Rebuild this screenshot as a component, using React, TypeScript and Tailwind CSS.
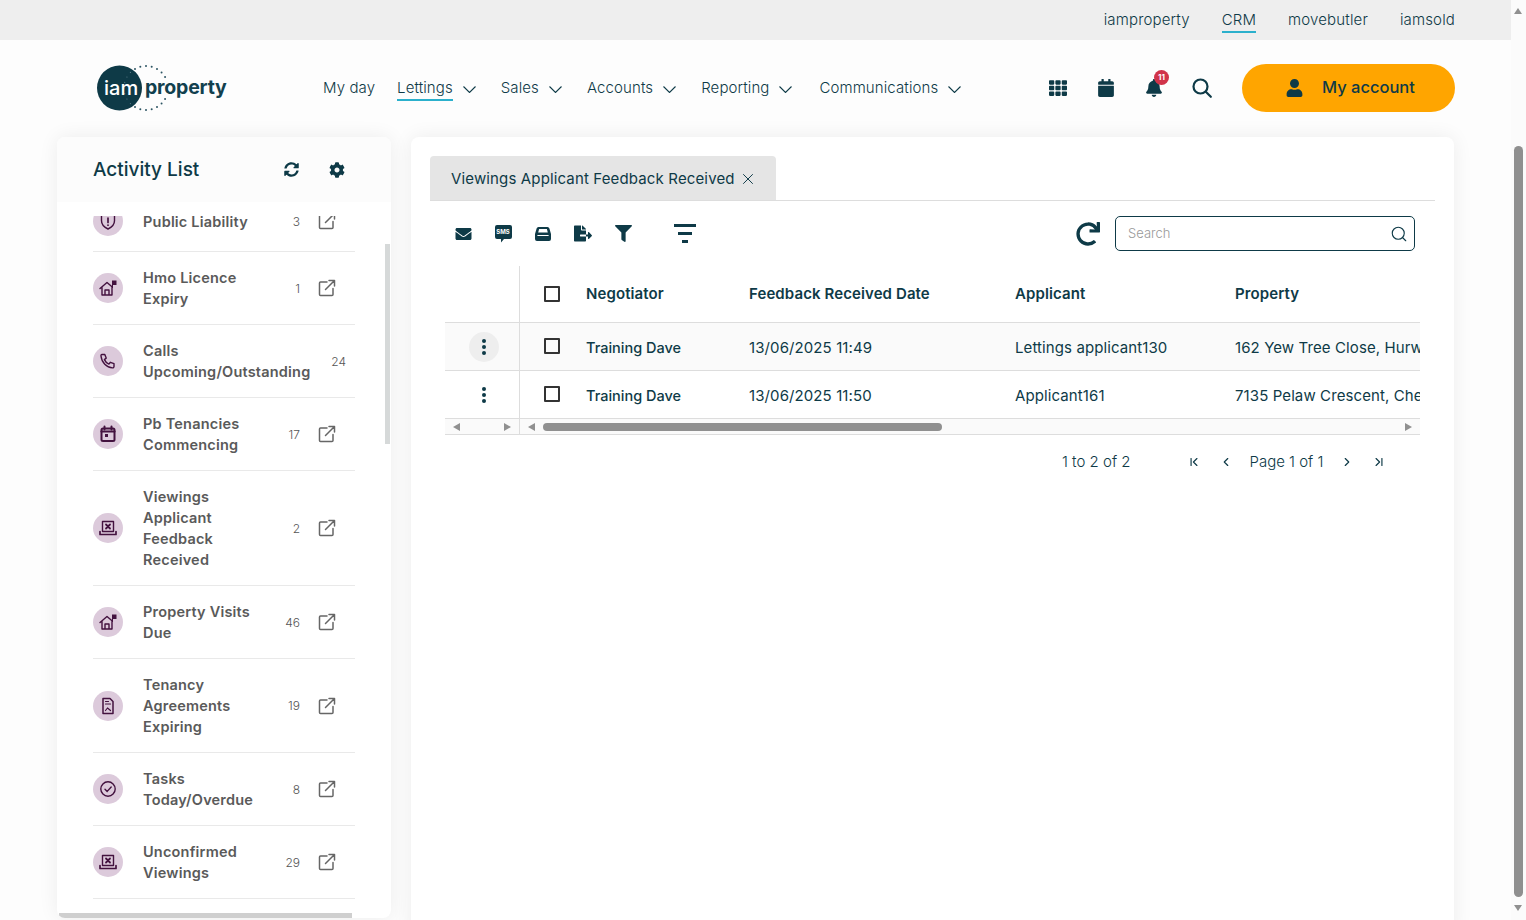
import { ChevronFirst, ChevronLast, ChevronLeft, ChevronRight, Search, X } from "lucide-react";
import { FaBell, FaCalendar, FaCog, FaEnvelope, FaFileExport, FaFilter, FaRedo, FaSyncAlt, FaTh, FaUser } from "react-icons/fa";

const topLinks = ["iamproperty", "CRM", "movebutler", "iamsold"];
const navItems = [
  { label: "Lettings", active: true },
  { label: "Sales" },
  { label: "Accounts" },
  { label: "Reporting" },
  { label: "Communications" },
];

const activities = [
  { icon: "shield", lines: ["Public Liability"], count: "3" },
  { icon: "home", lines: ["Hmo Licence", "Expiry"], count: "1" },
  { icon: "phone", lines: ["Calls", "Upcoming/Outstanding"], count: "24", noLink: true },
  { icon: "calendar", lines: ["Pb Tenancies", "Commencing"], count: "17" },
  { icon: "viewing", lines: ["Viewings", "Applicant", "Feedback", "Received"], count: "2" },
  { icon: "home", lines: ["Property Visits", "Due"], count: "46" },
  { icon: "doc", lines: ["Tenancy", "Agreements", "Expiring"], count: "19" },
  { icon: "check", lines: ["Tasks", "Today/Overdue"], count: "8" },
  { icon: "viewing", lines: ["Unconfirmed", "Viewings"], count: "29" },
  { icon: "home", lines: ["Warranty"], count: "5" },
];

const rows = [
  { negotiator: "Training Dave", date: "13/06/2025 11:49", applicant: "Lettings applicant130", property: "162 Yew Tree Close, Hurworth Road", hover: true },
  { negotiator: "Training Dave", date: "13/06/2025 11:50", applicant: "Applicant161", property: "7135 Pelaw Crescent, Chester Road", hover: false },
];

function ActivityIcon({ name }: { name: string }) {
  const stroke = { fill: "none", stroke: "#43123f", strokeWidth: 1.7, strokeLinecap: "round" as const, strokeLinejoin: "round" as const };
  return (
    <span className="flex h-[30px] w-[30px] shrink-0 items-center justify-center rounded-full bg-[#dccadb]">
      <svg viewBox="0 0 20 20" className="h-[20px] w-[20px]">
        {name === "shield" && (
          <>
            <path d="M10 2l6.500 2.400v5.300c0 3.800-2.700 6.500-6.500 8.300-3.800-1.800-6.500-4.500-6.500-8.300V4.400z" {...stroke} strokeWidth={1.4} />
            <path d="M10 7v4.500M10 14v.2" {...stroke} />
          </>
        )}
        {name === "home" && (
          <>
            <path d="M2 10.500L9 4.500l5 4.300M4 9.500V17h10V9.500M7 17v-5h4v5" {...stroke} strokeWidth={1.4} />
            <path d="M14 2.500h4.500V7H15v3h-1z" fill="#43123f" />
          </>
        )}
        {name === "phone" && (
          <path d="M4 3.500h2.800l1.400 3.600-1.800 1.500c.9 2 2.500 3.600 4.500 4.500l1.500-1.800 3.600 1.400v2.800c0 .8-.7 1.500-1.500 1.400C8.600 16.400 3.600 11.400 3 5c-.1-.8.2-1.500 1-1.500z" {...stroke} strokeWidth={1.4} />
        )}
        {name === "calendar" && (
          <>
            <rect x="3.500" y="4.500" width="13" height="12.500" rx="1.500" {...stroke} strokeWidth={2} />
            <path d="M3.500 7.500h13" {...stroke} strokeWidth={2.2} />
            <path d="M6.500 2.500v3M13.500 2.500v3" {...stroke} strokeWidth={2} />
            <rect x="7" y="10" width="3" height="3" fill="#43123f" />
          </>
        )}
        {name === "viewing" && (
          <>
            <rect x="4.500" y="3.500" width="11" height="10" {...stroke} strokeWidth={1.4} />
            <path d="M8 6.500l4 4M12 6.500l-4 4" {...stroke} strokeWidth={1.8} />
            <path d="M2 13.500v3h16v-3" {...stroke} />
          </>
        )}
        {name === "doc" && (
          <>
            <path d="M5 2.500h7l3 3v12H5z" {...stroke} strokeWidth={1.5} />
            <path d="M7.500 5.500h3M7.500 8h5M7.500 14.500l2-2.500 3 2.500" {...stroke} strokeWidth={1.2} />
          </>
        )}
        {name === "check" && (
          <>
            <circle cx="10" cy="10" r="7.200" {...stroke} strokeWidth={1.4} />
            <path d="M7 10.200l2.200 2.200 4-4.400" {...stroke} strokeWidth={1.4} />
          </>
        )}
      </svg>
    </span>
  );
}

function ExternalLink() {
  return (
    <svg viewBox="0 0 18 18" className="h-[18px] w-[18px] shrink-0" fill="none" stroke="#666666" strokeWidth="1.5" strokeLinecap="round" strokeLinejoin="round">
      <path d="M9 3H2.500a1 1 0 0 0-1 1v11.500a1 1 0 0 0 1 1H14a1 1 0 0 0 1-1V9.500" />
      <path d="M7.500 10.500l9-9M11 1.500h5.500V7" />
    </svg>
  );
}

function Logo() {
  const ring = [];
  for (let deg = -180; deg < 180; deg += 15) {
    if (Math.abs(deg) < 20) continue;
    const a = (deg * Math.PI) / 180;
    const inside = Math.abs(deg) > 120;
    ring.push({ deg, inside, x: 49 + 22 * Math.cos(a), y: 24 + 22 * Math.sin(a) });
  }
  return (
    <div className="relative h-[48px] w-[132px]">
      <svg viewBox="0 0 132 48" className="absolute inset-0 h-[48px] w-[132px]">
        <circle cx="22.500" cy="24" r="22.500" fill="#0e3a47" />
        {ring.map((d) => (
          <circle key={d.deg} cx={d.x} cy={d.y} r={d.inside ? 0.6 : 1} fill={d.inside ? "#5d7d88" : "#2d5563"} />
        ))}
      </svg>
      <span className="absolute left-[7px] top-[10px] text-[20px] leading-[28px] font-medium text-white">iam</span>
      <span className="absolute left-[48px] top-[9px] text-[19.5px] leading-[28px] font-bold tracking-[-0.2px] text-[#12404e]">property</span>
    </div>
  );
}

function InboxIcon() {
  return (
    <svg viewBox="0 0 16 14" className="h-[14px] w-[16px]">
      <path fillRule="evenodd" fill="#0e3a47" d="M3.500 0h9a2 2 0 0 1 1.900 1.500L16 7v5a2 2 0 0 1-2 2H2a2 2 0 0 1-2-2V7l1.600-5.500A2 2 0 0 1 3.500 0zm.6 2L3.200 5.500h9.600L11.900 2zM2.400 8v1h11.200V8z" />
    </svg>
  );
}

function SmsIcon() {
  return (
    <div className="relative h-[18px] w-[17px]">
      <svg viewBox="0 0 17 18" className="absolute inset-0 h-[18px] w-[17px]">
        <path fill="#0e3a47" d="M2 0h13a2 2 0 0 1 2 2v10a2 2 0 0 1-2 2H9l-3 3.500V14H2a2 2 0 0 1-2-2V2a2 2 0 0 1 2-2z" />
      </svg>
      <span className="absolute left-0 top-[3px] w-full text-center text-[6px] leading-[8px] font-bold text-white">SMS</span>
    </div>
  );
}

export default function App() {
  return (
    <div className="flex h-[920px] overflow-hidden bg-[#fdfdfd] font-['Inter',sans-serif] text-[#0e3a47]">
      <div className="w-[1511px] shrink-0">
        <div className="flex h-10 items-center justify-end gap-8 bg-[#eeeeee] pt-[2px] pr-[56px] text-[15px] font-light tracking-[0.15px]">
          {topLinks.map((link) => (
            <span key={link} className={link === "CRM" ? "border-b-2 border-[#2bb0cc] leading-[22px]" : "border-b-2 border-transparent leading-[22px]"}>
              {link}
            </span>
          ))}
        </div>

        <div className="flex h-[97px] items-center pr-[56px] pb-[2px] pl-[97px]">
          <Logo />
          <nav className="mt-[2px] ml-[94px] flex items-center gap-[25px] text-[15px] font-light tracking-[0.1px]">
            <span className="-mr-[3px]">My day</span>
            {navItems.map((item) => (
              <span key={item.label} className="flex items-center gap-[10px] last:ml-[2px]">
                <span className={item.active ? "border-b-2 border-[#2bb0cc] leading-[22px]" : "border-b-2 border-transparent leading-[22px]"}>{item.label}</span>
                <svg viewBox="0 0 13 7" className="mt-[2px] h-[7px] w-[13px]" fill="none" stroke="#0e3a47" strokeWidth="1.1">
                  <path d="M.5.500l6 6 6-6" />
                </svg>
              </span>
            ))}
          </nav>
          <div className="ml-auto flex items-center gap-[30px]">
            <FaTh className="h-[18px] w-[18px]" />
            <FaCalendar className="h-[18px] w-[18px]" />
            <div className="relative">
              <FaBell className="h-[18px] w-[18px]" />
              <span className="absolute -top-[9px] -right-[6px] flex h-[15px] w-[15px] items-center justify-center rounded-full bg-[#d1344a] text-[8px] font-bold text-white">11</span>
            </div>
            <svg viewBox="0 0 20 20" className="mr-[10px] -ml-px h-5 w-5" fill="none" stroke="#0e3a47" strokeWidth="2.2" strokeLinecap="round">
              <circle cx="8.500" cy="8.500" r="7" />
              <path d="M13.800 13.800l5 5" />
            </svg>
          </div>
          <div className="ml-[20px] flex h-12 w-[213px] items-center rounded-full bg-[#ffa500] pl-[44px] text-[16.5px] font-medium">
            <FaUser className="h-[18px] w-[17px]" />
            <span className="ml-[19px]">My account</span>
          </div>
        </div>

        <div className="flex gap-5 pl-[57px]">
          <aside className="h-[781px] w-[334px] shrink-0 overflow-hidden rounded-lg bg-white shadow-[0_0_20px_rgba(0,0,0,0.07)]">
            <div className="flex h-[65px] items-center bg-[#fcfcfc] pl-[36px]">
              <h2 className="pt-[2px] text-[19px] font-medium">Activity List</h2>
              <FaSyncAlt className="ml-auto h-[15px] w-[15px]" />
              <FaCog className="mr-[46px] ml-[30px] h-[16px] w-[16px]" />
            </div>
            <div className="relative mt-[14px] h-[702px] overflow-hidden pl-[36px]">
              <div className="-mt-[25px] w-[262px]">
                {activities.map((item) => (
                  <div key={item.lines.join(" ")} className="flex items-center border-b border-[#e9e9e9] py-[15px]">
                    <ActivityIcon name={item.icon} />
                    <div className="ml-[20px] text-[14.5px] leading-[21px] font-semibold tracking-[0.2px] whitespace-nowrap text-[#5a5a5a]">
                      {item.lines.map((line) => (
                        <div key={line}>{line}</div>
                      ))}
                    </div>
                    {item.noLink ? (
                      <span className="mr-[9px] ml-auto pt-px text-[12px] font-light text-[#555555]">{item.count}</span>
                    ) : (
                      <>
                        <span className="ml-auto pt-px text-[12px] font-light text-[#555555]">{item.count}</span>
                        <span className="mr-[19px] ml-[18px]">
                          <ExternalLink />
                        </span>
                      </>
                    )}
                  </div>
                ))}
              </div>
              <div className="absolute top-[28px] left-[328px] h-[200px] w-[5px] bg-[#d6d9d9]" />
              <div className="absolute bottom-0 left-[2px] h-[5px] w-[293px] bg-[#cfcfcf]" />
            </div>
          </aside>

          <main className="h-[800px] w-[1043px] shrink-0 rounded-lg bg-white px-[19px] pt-[19px] shadow-[0_0_20px_rgba(0,0,0,0.07)]">
            <div className="border-b border-[#dddddd]">
              <div className="inline-flex h-[44px] w-[346px] items-center gap-[4px] rounded-t bg-[#e5e5e5] pt-[2px] pl-[21px] text-[15px] font-normal tracking-[0.14px]">
                <span>Viewings Applicant Feedback Received</span>
                <X className="h-[18px] w-[18px]" strokeWidth={1.3} />
              </div>
            </div>

            <div className="mt-[15px] flex h-[35px] items-center pr-[20px] pl-[24px]">
              <div className="flex w-[18px] justify-center"><FaEnvelope className="h-[16px] w-[17px]" /></div>
              <div className="ml-[22px] flex w-[18px] justify-center"><SmsIcon /></div>
              <div className="ml-[22px] flex w-[18px] justify-center"><InboxIcon /></div>
              <div className="ml-[22px] flex w-[18px] justify-center"><FaFileExport className="h-[17px] w-[20px]" /></div>
              <div className="ml-[22px] flex w-[18px] justify-center"><FaFilter className="h-[17px] w-[17px]" /></div>
              <div className="ml-[42px] flex w-[22px] flex-col items-center gap-[5px]">
                <span className="h-[3px] w-[22px] bg-[#0e3a47]" />
                <span className="h-[3px] w-[14px] bg-[#0e3a47]" />
                <span className="h-[3px] w-[6px] bg-[#0e3a47]" />
              </div>
              <FaRedo className="ml-auto h-[24px] w-[24px]" />
              <div className="ml-[15px] flex h-[35px] w-[300px] items-center justify-between rounded-[5px] border border-[#0e3a47] pr-[6px] pl-[12px] text-[13px] font-light text-[#999999]">
                <span>Search</span>
                <Search className="h-[18px] w-[18px] text-[#0e3a47]" strokeWidth={1.5} />
              </div>
            </div>

            <div className="mt-[15px] ml-[15px] w-[975px] overflow-hidden text-[15px] tracking-[0.1px]">
              <div className="flex h-[57px] items-center border-b border-[#dddddd] font-semibold">
                <div className="h-full w-[75px] shrink-0 border-r border-[#dddddd]" />
                <Cells negotiator="Negotiator" date="Feedback Received Date" applicant="Applicant" property="Property" />
              </div>
              {rows.map((row) => (
                <div key={row.date} className={`flex h-[48px] items-center border-b border-[#dddddd] ${row.hover ? "bg-[#fafafa]" : "bg-white"}`}>
                  <div className="flex h-full w-[75px] shrink-0 items-center justify-center border-r border-[#dddddd] pl-[4px]">
                    <span className={`flex h-[30px] w-[30px] flex-col items-center justify-center gap-[2px] rounded-full ${row.hover ? "bg-[#eeeeee]" : ""}`}>
                      <i className="h-[4px] w-[4px] rounded-full bg-[#0e3a47]" />
                      <i className="h-[4px] w-[4px] rounded-full bg-[#0e3a47]" />
                      <i className="h-[4px] w-[4px] rounded-full bg-[#0e3a47]" />
                    </span>
                  </div>
                  <Cells body negotiator={row.negotiator} date={row.date} applicant={row.applicant} property={row.property} />
                </div>
              ))}
              <div className="flex h-[16px] items-center border-b border-[#dddddd] bg-[#fafafa]">
                <div className="flex h-full w-[75px] shrink-0 items-center justify-between border-r border-[#dddddd] px-[8px]">
                  <span className="h-0 w-0 border-y-[4px] border-r-[7px] border-y-transparent border-r-[#909090]" />
                  <span className="h-0 w-0 border-y-[4px] border-l-[7px] border-y-transparent border-l-[#909090]" />
                </div>
                <div className="flex flex-1 items-center px-[8px]">
                  <span className="h-0 w-0 border-y-[4px] border-r-[7px] border-y-transparent border-r-[#909090]" />
                  <span className="ml-[8px] h-[8px] w-[399px] rounded-full bg-[#909090]" />
                  <span className="ml-auto h-0 w-0 border-y-[4px] border-l-[7px] border-y-transparent border-l-[#909090]" />
                </div>
              </div>
            </div>

            <div className="mt-[16px] ml-[15px] flex w-[975px] items-center pl-[617px] text-[15px] font-light">
              <span>1 to 2 of 2</span>
              <ChevronFirst className="ml-[56px] h-[14px] w-[14px]" strokeWidth={2} />
              <ChevronLeft className="ml-[18px] h-[14px] w-[14px]" strokeWidth={2} />
              <span className="ml-[17px]">Page 1 of 1</span>
              <ChevronRight className="ml-[17px] h-[14px] w-[14px]" strokeWidth={2} />
              <ChevronLast className="ml-[18px] h-[14px] w-[14px]" strokeWidth={2} />
            </div>
          </main>
        </div>
      </div>

      <div className="relative flex-1 bg-[#fbfbfb]">
        <span className="absolute top-[8px] left-[3px] h-0 w-0 border-x-[4.5px] border-b-[6px] border-x-transparent border-b-[#909090]" />
        <div className="absolute top-[146px] left-[3px] h-[751px] w-[9px] rounded-full bg-[#8f8f8f]" />
        <span className="absolute top-[905px] left-[3px] h-0 w-0 border-x-[4.5px] border-t-[6px] border-x-transparent border-t-[#909090]" />
      </div>
    </div>
  );
}

function Cells({ negotiator, date, applicant, property, body }: { negotiator: string; date: string; applicant: string; property: string; body?: boolean }) {
  return (
    <>
      <div className={`flex w-[66px] shrink-0 pl-[24px] ${body ? "pb-[2px]" : ""}`}>
        <span className="h-[16px] w-[16px] rounded-[1px] border-2 border-[#333333]" />
      </div>
      <div className={body ? "w-[163px] shrink-0 pt-[2px] text-[14.5px] font-medium tracking-normal" : "w-[163px] shrink-0"}>{negotiator}</div>
      <div className={`w-[266px] shrink-0 ${body ? "pt-[4px]" : ""}`}>{date}</div>
      <div className={`w-[220px] shrink-0 ${body ? "pt-[4px]" : ""}`}>{applicant}</div>
      <div className={`whitespace-nowrap ${body ? "pt-[4px]" : ""}`}>{property}</div>
    </>
  );
}
